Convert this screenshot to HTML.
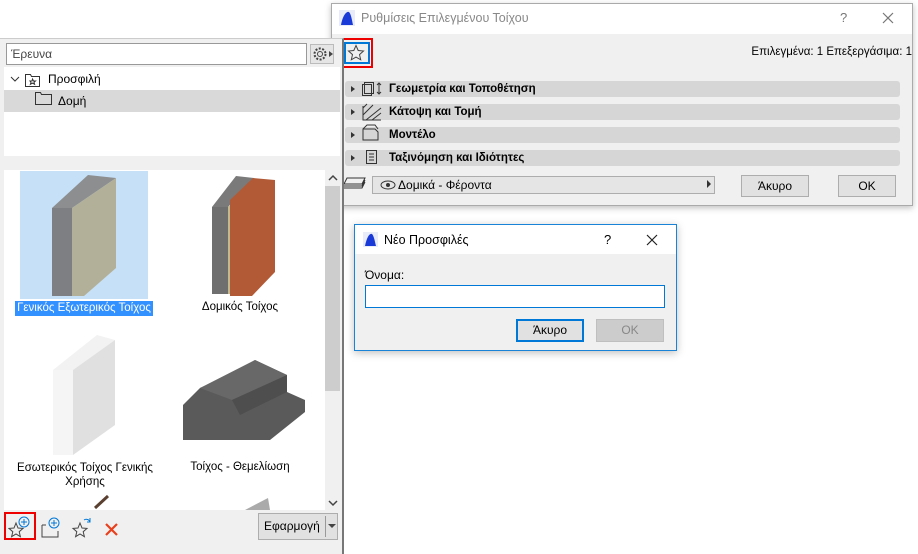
<!DOCTYPE html>
<html><head><meta charset="utf-8"><style>
*{box-sizing:border-box;margin:0;padding:0}
body{width:918px;height:554px;background:#fff;position:relative;overflow:hidden;font-family:"Liberation Sans","DejaVu Sans",sans-serif;font-size:12px;color:#000}
.a{position:absolute}
.sec{position:absolute;left:345px;width:555px;height:16px;background:#d6d6d6;border-radius:3px;font-weight:bold;font-size:11.5px;line-height:16px}
.sec .tri{position:absolute;left:6px;top:5px;width:0;height:0;border-left:4px solid #333;border-top:3px solid transparent;border-bottom:3px solid transparent}
.sec span{position:absolute;left:44px}
.btn{position:absolute;background:#e1e1e1;border:1px solid #adadad;text-align:center;font-size:12px}
</style></head><body>

<!-- Right dialog -->
<div class="a" style="left:331px;top:3px;width:582px;height:203px;background:#f0f0f0;border:1px solid #aaa;box-shadow:0 2px 6px rgba(0,0,0,.25)"></div>
<div class="a" style="left:332px;top:4px;width:580px;height:30px;background:#fff"></div>
<svg class="a" style="left:339px;top:10px" width="16" height="16"><rect width="16" height="16" fill="#e8ecf8"/><path d="M2 15 C4 4,8 1,10 2 C12 4,13 10,14 15Z" fill="#1a3ad8"/></svg>
<div class="a" style="left:361px;top:11px;color:#888;font-size:12.5px">Ρυθμίσεις Επιλεγμένου Τοίχου</div>
<div class="a" style="left:840px;top:10px;color:#777;font-size:13px">?</div>
<svg class="a" style="left:882px;top:12px" width="12" height="12"><path d="M1 1L11 11M11 1L1 11" stroke="#777" stroke-width="1.2"/></svg>
<div class="a" style="right:6px;top:46px;font-size:11.5px">Επιλεγμένα: 1 Επεξεργάσιμα: 1</div>

<div class="sec" style="top:81px"><i class="tri"></i><span>Γεωμετρία και Τοποθέτηση</span></div>
<div class="sec" style="top:104px"><i class="tri"></i><span>Κάτοψη και Τομή</span></div>
<div class="sec" style="top:127px"><i class="tri"></i><span>Μοντέλο</span></div>
<div class="sec" style="top:150px"><i class="tri"></i><span>Ταξινόμηση και Ιδιότητες</span></div>
<svg class="a" style="left:362px;top:82px" width="30" height="84" fill="none" stroke="#333" stroke-width="1">
<rect x="2.5" y="0.5" width="9" height="11"/><rect x="0.5" y="2.5" width="9" height="11"/><path d="M17 1v11M15 3l2-2 2 2M15 10l2 2 2-2"/>
<path d="M1 24v14h18M1 26l4-4M1 33l10-10M4 38l15-12M10 38l9-7"/>
<path d="M1 47h12l3 3v8H1z M1 47l4-4h8l3 4"/>
<rect x="4.5" y="68.5" width="10" height="13"/><path d="M7 72h5M7 75h5M7 78h5"/>
</svg>
<svg class="a" style="left:343px;top:176px" width="26" height="16" fill="none" stroke="#333"><path d="M4 2h18l-3 6H1zM1 10h18l3-6M1 12h18l3-6"/></svg>
<div class="a" style="left:372px;top:176px;width:343px;height:18px;background:#e5e5e5;border:1px solid #adadad"></div>
<svg class="a" style="left:380px;top:180px" width="16" height="10"><ellipse cx="8" cy="5" rx="7" ry="4" fill="none" stroke="#333"/><circle cx="8" cy="5" r="2" fill="#333"/></svg>
<div class="a" style="left:398px;top:178px;font-size:12px">Δομικά - Φέροντα</div>
<div class="a" style="left:707px;top:180px;border-left:4px solid #333;border-top:4px solid transparent;border-bottom:4px solid transparent"></div>
<div class="btn" style="left:741px;top:175px;width:68px;height:22px;line-height:20px">Άκυρο</div>
<div class="btn" style="left:838px;top:175px;width:58px;height:22px;line-height:20px">OK</div>

<!-- star button -->
<div class="a" style="left:339px;top:38px;width:34px;height:30px;border:2px solid #e00"></div>
<div class="a" style="left:344px;top:42px;width:26px;height:22px;border:2px solid #0078d7;background:#f0f0f0"></div>
<svg class="a" style="left:347px;top:44px" width="18" height="18"><path d="M9 1.5l2.2 5 5.3.5-4 3.6 1.2 5.2L9 13.1 4.3 15.8l1.2-5.2-4-3.6 5.3-.5z" fill="none" stroke="#444"/></svg>

<!-- Left panel -->
<div class="a" style="left:0;top:38px;width:344px;height:516px;background:#f0f0f0;border-top:1px solid #ccc;border-right:2px solid #777"></div>
<div class="a" style="left:6px;top:43px;width:301px;height:22px;background:#fff;border:1px solid #999;padding:3px 4px;color:#444">Έρευνα</div>
<svg class="a" style="left:310px;top:44px" width="26" height="20"><rect x=".5" y=".5" width="23" height="19" fill="#e5e5e5" stroke="#bbb"/><circle cx="10" cy="10" r="5.5" fill="none" stroke="#444" stroke-dasharray="2 1.5" stroke-width="2"/><circle cx="10" cy="10" r="2.5" fill="none" stroke="#444"/><path d="M19 7l4 3-4 3z" fill="#444"/></svg>
<div class="a" style="left:4px;top:67px;width:336px;height:89px;background:#fff"></div>
<div class="a" style="left:4px;top:90px;width:336px;height:22px;background:#d9d9d9"></div>
<svg class="a" style="left:10px;top:72px" width="50" height="38" fill="none" stroke="#333"><path d="M1 5l4 4 4-4"/><path d="M15.5 2.5h5l1 2h8v10h-14z"/><path d="M22.5 7l1 2h2l-1.5 1.3.6 2-2.1-1.2-2.1 1.2.6-2L20 9h2z"/><path d="M25.5 20.5h5l1 2h10v10h-16z"/></svg>
<div class="a" style="left:48px;top:72px">Προσφιλή</div>
<div class="a" style="left:58px;top:94px">Δομή</div>

<div class="a" style="left:4px;top:170px;width:336px;height:340px;background:#fff"></div>
<div class="a" style="left:325px;top:170px;width:15px;height:340px;background:#f0f0f0"></div>
<div class="a" style="left:325px;top:186px;width:15px;height:205px;background:#cdcdcd"></div>
<svg class="a" style="left:327px;top:173px" width="12" height="10"><path d="M2 7l4-4 4 4" fill="none" stroke="#444" stroke-width="1.5"/></svg>
<svg class="a" style="left:327px;top:498px" width="12" height="10"><path d="M2 3l4 4 4-4" fill="none" stroke="#444" stroke-width="1.5"/></svg>

<!-- thumbnails (page coords) -->
<div class="a" style="left:20px;top:171px;width:128px;height:128px;background:#c6e0f7"></div>
<svg class="a" style="left:0;top:0" width="325" height="510">
<polygon points="52,208 88,175 116,178 72,208" fill="#8c8e90"/>
<polygon points="52,208 72,208 72,296 52,296" fill="#7d7f82"/>
<polygon points="72,208 116,178 116,268 84,296 72,296" fill="#b2b098"/>
<polygon points="212,207 236,176 254,178 228,207" fill="#7a7a7a"/>
<polygon points="212,207 228,207 228,294 212,294" fill="#6f6f6f"/>
<polygon points="228,207 236,200 236,294 228,294" fill="#c2b98f"/>
<polygon points="230,200 253,178 275,180 275,272 252,296 230,296" fill="#b25a36"/>
<polygon points="53,370 97,335 115,340 73,370" fill="#f2f2f2"/>
<polygon points="53,370 73,370 73,455 53,455" fill="#f5f5f5"/>
<polygon points="73,370 115,340 115,425 73,455" fill="#e0e0e0"/>
<polygon points="183,405 200,388 235,372 255,360 287,375 287,392 305,400 305,412 270,440 183,440" fill="#5a5a5a"/>
<polygon points="200,388 255,360 287,375 232,400" fill="#686868"/>
<polygon points="232,400 287,375 287,392 240,415" fill="#4e4e4e"/>
</svg>
<div class="a" style="left:15px;top:301px;width:138px;height:15px;background:#3390ff;color:#fff;font-size:11.5px;line-height:15px;text-align:center">Γενικός Εξωτερικός Τοίχος</div>
<div class="a" style="left:165px;top:301px;width:150px;text-align:center;font-size:11.5px">Δομικός Τοίχος</div>
<div class="a" style="left:10px;top:461px;width:150px;text-align:center;font-size:11.5px;line-height:14px">Εσωτερικός Τοίχος Γενικής Χρήσης</div>
<div class="a" style="left:165px;top:461px;width:150px;text-align:center;font-size:11.5px">Τοίχος - Θεμελίωση</div>
<svg class="a" style="left:0;top:490px" width="325" height="20"><path d="M95 18 L108 6" stroke="#5a4030" stroke-width="3"/><polygon points="245,20 268,8 270,20" fill="#aaa"/></svg>

<!-- bottom toolbar -->
<div class="a" style="left:4px;top:512px;width:32px;height:28px;border:2px solid #e00"></div>
<svg class="a" style="left:8px;top:514px" width="120" height="26" fill="none">
<path d="M8 9l2 5 5 .4-3.8 3.3 1.2 5L8 20l-4.4 2.7 1.2-5L1 14.4 6 14z" stroke="#444"/>
<circle cx="16" cy="8" r="5" stroke="#0078d7"/><path d="M16 5v6M13 8h6" stroke="#0078d7"/>
<path d="M34 11v12h16V17M34 11h4" stroke="#444"/><circle cx="46" cy="9" r="5" stroke="#0078d7"/><path d="M46 6v6M43 9h6" stroke="#0078d7"/>
<path d="M72 9l2 5 5 .4-3.8 3.3 1.2 5L72 20l-4.4 2.7 1.2-5L65 14.4 70 14z" stroke="#444"/>
<path d="M76 6a4 4 0 0 1 6 2M82 4v4h-3" stroke="#0078d7"/>
<path d="M98 10l11 11M109 10l-11 11" stroke="#e8401c" stroke-width="2.2"/>
</svg>
<div class="a" style="left:258px;top:513px;width:80px;height:27px;background:#e1e1e1;border:1px solid #adadad"></div>
<div class="a" style="left:264px;top:519px;font-size:12px">Εφαρμογή</div>
<div class="a" style="left:325px;top:516px;width:1px;height:21px;background:#999"></div>
<div class="a" style="left:328px;top:524px;border-top:4px solid #444;border-left:4px solid transparent;border-right:4px solid transparent"></div>

<!-- small dialog -->
<div class="a" style="left:354px;top:224px;width:323px;height:127px;background:#f0f0f0;border:1px solid #1883d7;box-shadow:0 2px 8px rgba(0,0,0,.25)"></div>
<div class="a" style="left:355px;top:225px;width:321px;height:29px;background:#fff"></div>
<svg class="a" style="left:363px;top:232px" width="15" height="15"><rect width="15" height="15" fill="#e8ecf8"/><path d="M2 14 C4 4,7 1,9 2 C11 4,12 10,13 14Z" fill="#1a3ad8"/></svg>
<div class="a" style="left:384px;top:233px;font-size:12.5px">Νέο Προσφιλές</div>
<div class="a" style="left:604px;top:232px;font-size:13px">?</div>
<svg class="a" style="left:646px;top:234px" width="12" height="12"><path d="M1 1L11 11M11 1L1 11" stroke="#222" stroke-width="1.2"/></svg>
<div class="a" style="left:365px;top:268px;font-size:12px">Όνομα:</div>
<div class="a" style="left:365px;top:285px;width:300px;height:23px;background:#fff;border:1px solid #0078d7"></div>
<div class="btn" style="left:516px;top:319px;width:68px;height:23px;line-height:19px;border:2px solid #0078d7">Άκυρο</div>
<div class="btn" style="left:596px;top:319px;width:68px;height:23px;line-height:21px;background:#ccc;border-color:#bfbfbf;color:#888">OK</div>
</body></html>
